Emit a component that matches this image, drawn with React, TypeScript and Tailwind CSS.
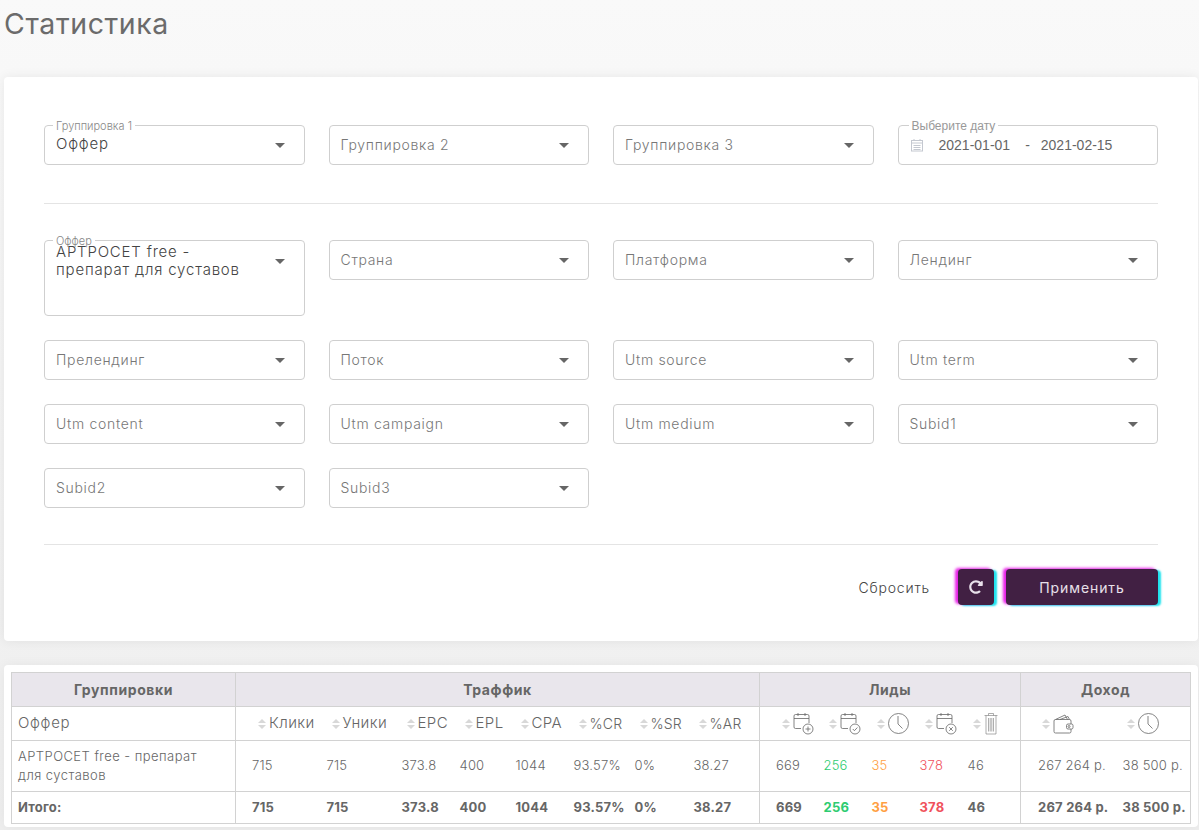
import { FaRedoAlt } from "react-icons/fa";

const font = "font-['Inter','Noto_Sans',sans-serif]";

function Caret() {
  return <span className="block h-0 w-0 shrink-0 border-x-[5px] border-t-[5px] border-x-transparent border-t-[#666]" />;
}

function Select({ label, value, tall }: { label: string; value?: string; tall?: boolean }) {
  return (
    <div className={`relative flex rounded border border-[#cfcfcf] pl-[11px] pr-[19px] ${tall ? "h-[76px] items-start pt-[2px]" : "h-10 items-center"}`}>
      {value ? (
        <span className="absolute -top-[6px] left-[8px] bg-white px-[3px] text-[11px] font-light leading-[12px] text-[#888]">{label}</span>
      ) : null}
      <span className={`${tall ? "relative max-w-[205px] leading-[18px]" : "pb-[2px]"} flex-1 font-light ${value ? "text-[15px] tracking-[0.8px] text-[#444]" : "text-[14px] tracking-[0.7px] text-[#777]"}`}>
        {value ?? label}
      </span>
      <span className={tall ? "ml-auto mt-[16px]" : ""}><Caret /></span>
    </div>
  );
}

function DateField() {
  return (
    <div className="relative flex h-10 items-center rounded border border-[#cfcfcf] pl-[11px] font-['Liberation_Sans',sans-serif] text-[14px] text-[#666]">
      <span className="absolute -top-[6px] left-[10px] bg-white px-[3px] text-[12px] leading-[12px] text-[#999]">Выберите дату</span>
      <svg width="14" height="14" viewBox="0 0 14 14" fill="none" stroke="#c4c8d0" strokeWidth="1" className="mr-[15px]">
        <rect x="1.5" y="2.5" width="11" height="10.5" />
        <path d="M1.5 5h11M4 1v2M10 1v2M3.5 7.5h7M3.5 9.5h7M3.5 11.5h7" />
      </svg>
      <span>2021-01-01</span>
      <span className="ml-[15px] mr-[11px]">-</span>
      <span>2021-02-15</span>
    </div>
  );
}

function Sort() {
  return (
    <span className="flex w-[8px] shrink-0 flex-col gap-[2px]">
      <span className="h-0 w-0 border-x-[4px] border-b-[4px] border-x-transparent border-b-[#d8d8d8]" />
      <span className="h-0 w-0 border-x-[4px] border-t-[4px] border-x-transparent border-t-[#d8d8d8]" />
    </span>
  );
}

const stroke = { fill: "none", stroke: "#666", strokeWidth: 0.8 };

function Cal({ badge }: { badge: "plus" | "check" | "x" }) {
  return (
    <svg width="21" height="23" viewBox="0 0 21 23" {...stroke}>
      <path d="M8 16.5H2.5a1.5 1.5 0 0 1-1.5-1.5V4a1.5 1.5 0 0 1 1.5-1.5h12A1.5 1.5 0 0 1 16 4v7M1 6.5h15M5 1v3M12 1v3" />
      <circle cx="15" cy="17" r="5" />
      {badge === "plus" && <path d="M12.5 17h5M15 14.5v5" />}
      {badge === "check" && <path d="M12.8 17l1.6 1.7 3-3.2" />}
      {badge === "x" && <path d="M13.2 15.2l3.6 3.6M16.8 15.2l-3.6 3.6" />}
    </svg>
  );
}

function Clock() {
  return (
    <svg width="21" height="23" viewBox="0 0 21 23" {...stroke}>
      <circle cx="10.5" cy="11.5" r="10" />
      <path d="M10 4v8l4.5 4.5" />
    </svg>
  );
}

function Trash() {
  return (
    <svg width="14" height="23" viewBox="0 0 14 23" fill="none" stroke="#777" strokeWidth="0.6">
      <path d="M.5 3.5h13M4.5 3.5V1.5h5v2M2 3.5v18.5h10V3.5M4.5 6v13.5M6.2 6v13.5M7.8 6v13.5M9.5 6v13.5" />
    </svg>
  );
}

function Wallet() {
  return (
    <svg width="21" height="20" viewBox="0 0 21 20" {...stroke}>
      <path d="M2.5 5.5L12 1l2.5 4.5M7 5.5l8-3 1.5 3M18 10V7a1.5 1.5 0 0 0-1.5-1.5h-14A1.5 1.5 0 0 0 1 7v10.5A1.5 1.5 0 0 0 2.5 19h14a1.5 1.5 0 0 0 1.5-1.5V15" />
      <rect x="13.5" y="10" width="6.5" height="5" rx="1.5" />
      <circle cx="16" cy="12.5" r="1" />
    </svg>
  );
}

function Narrow({ children }: { children: string }) {
  return <span className="text-[14px] tracking-[0.2px]">{children}</span>;
}

const widths = [224, 91, 75, 58, 56, 58, 61, 59, 66, 64, 48, 48, 48, 53, 102, 68];

type Col = { head: React.ReactNode; value: string; color?: string; first?: boolean };

const cols: Col[] = [
  { head: "Клики", value: "715", first: true },
  { head: "Уники", value: "715" },
  { head: "EPC", value: "373.8" },
  { head: "EPL", value: "400" },
  { head: "CPA", value: "1044" },
  { head: <Narrow>%CR</Narrow>, value: "93.57%" },
  { head: <Narrow>%SR</Narrow>, value: "0%" },
  { head: <Narrow>%AR</Narrow>, value: "38.27" },
  { head: <Cal badge="plus" />, value: "669", first: true },
  { head: <Cal badge="check" />, value: "256", color: "text-[#2ecc71]" },
  { head: <Clock />, value: "35", color: "text-[#ff9f43]" },
  { head: <Cal badge="x" />, value: "378", color: "text-[#f0525c]" },
  { head: <Trash />, value: "46" },
  { head: <Wallet />, value: "267 264 р.", first: true },
  { head: <Clock />, value: "38 500 р." },
];

const cellBorder = "border border-[#d2d2d2]";
const incomeStart = 13;

function StatsTable() {
  return (
    <table className="w-[1179px] table-fixed border-collapse text-[#666]">
      <colgroup>
        {widths.map((w, i) => (
          <col key={i} style={{ width: w }} />
        ))}
      </colgroup>
      <thead>
        <tr className="h-[34px] bg-[#e9e6ec] text-[14px] font-semibold tracking-[0.6px]">
          <th className={cellBorder}>Группировки</th>
          <th className={cellBorder} colSpan={8}>Траффик</th>
          <th className={cellBorder} colSpan={5}>Лиды</th>
          <th className={cellBorder} colSpan={2}>Доход</th>
        </tr>
        <tr className="h-[34px] text-[15px] font-light tracking-[0.4px]">
          <th className={`${cellBorder} pl-[6px] text-left font-light tracking-[0.7px]`}>Оффер</th>
          {cols.map((c, i) => (
            <th
              key={i}
              className={`${c.first ? `border-l border-[#d2d2d2] ${i >= incomeStart ? "pl-[21px]" : "pl-[22px]"}` : i >= incomeStart ? "pl-[4px]" : "pl-[5px]"} ${i === cols.length - 1 ? "border-r border-[#d2d2d2]" : ""} border-y border-y-[#d2d2d2] font-light`}
            >
              <span className="flex items-center gap-[3px] whitespace-nowrap">
                <Sort />
                {c.head}
              </span>
            </th>
          ))}
        </tr>
      </thead>
      <tbody className="text-[13px] tracking-[0.2px]">
        <tr className="h-[51px] font-light">
          <td className={`${cellBorder} pl-[6px] pr-[24px] leading-[19px] tracking-[0.45px]`}>АРТРОСЕТ free - препарат для суставов</td>
          {cols.map((c, i) => (
            <td key={i} className={`${c.first ? `border-l border-[#d2d2d2] ${i >= incomeStart ? "pl-[17px]" : "pl-[16px]"}` : ""} ${i === cols.length - 1 ? "border-r border-[#d2d2d2]" : ""} whitespace-nowrap ${c.color ?? ""}`}>
              {c.value}
            </td>
          ))}
        </tr>
        <tr className="h-[32px] font-bold">
          <td className={`${cellBorder} pl-[6px]`}>Итого:</td>
          {cols.map((c, i) => (
            <td key={i} className={`${c.first ? `border-l border-[#d2d2d2] ${i >= incomeStart ? "pl-[17px]" : "pl-[16px]"}` : ""} ${i === cols.length - 1 ? "border-r border-[#d2d2d2]" : ""} border-y border-y-[#d2d2d2] whitespace-nowrap ${c.color ?? ""}`}>
              {c.value}
            </td>
          ))}
        </tr>
      </tbody>
    </table>
  );
}

export default function App() {
  return (
    <div className={`${font} h-[830px] overflow-hidden bg-gradient-to-b from-[#f9f9f9] to-[#eeeeee] pl-1 pr-px`}>
      <h1 className="flex h-[77px] items-start pt-[4px] text-[28.5px] font-normal leading-[40px] tracking-[0.6px] text-[#6b6b6b]">Статистика</h1>

      <section className="h-[564px] rounded bg-white px-10 pt-12 shadow-[0_0_12px_rgba(0,0,0,0.07)]">
        <div className="grid grid-cols-4 gap-6">
          <Select label="Группировка 1" value="Оффер" />
          <Select label="Группировка 2" />
          <Select label="Группировка 3" />
          <DateField />
        </div>

        <hr className="mb-[36px] mt-[38px] border-[#e4e4e4]" />

        <div className="grid grid-cols-4 items-start gap-6">
          <Select label="Оффер" value="АРТРОСЕТ free - препарат для суставов" tall />
          <Select label="Страна" />
          <Select label="Платформа" />
          <Select label="Лендинг" />
          <Select label="Прелендинг" />
          <Select label="Поток" />
          <Select label="Utm source" />
          <Select label="Utm term" />
          <Select label="Utm content" />
          <Select label="Utm campaign" />
          <Select label="Utm medium" />
          <Select label="Subid1" />
          <Select label="Subid2" />
          <Select label="Subid3" />
        </div>

        <hr className="mb-[24px] mt-[36px] border-[#e4e4e4]" />

        <div className="flex items-center justify-end">
          <span className="mr-[28px] text-[14px] font-light tracking-[0.8px] text-[#444]">Сбросить</span>
          <button className="mr-3 flex h-[36px] w-[36px] items-center justify-center rounded bg-[#412043] text-[#e8e0ea] shadow-[-3px_-1px_3px_#e81ee8,3px_1px_2px_#1fe3ee]">
            <FaRedoAlt size={14} />
          </button>
          <button className="h-[36px] w-[152px] rounded bg-[#412043] text-[14px] tracking-[0.9px] text-[#e8e0ea] shadow-[-3px_-1px_3px_#e81ee8,3px_1px_2px_#1fe3ee]">
            Применить
          </button>
        </div>
      </section>

      <section className="mt-6 h-[162px] rounded bg-white p-[7px] shadow-[0_0_12px_rgba(0,0,0,0.05)]">
        <StatsTable />
      </section>
    </div>
  );
}
